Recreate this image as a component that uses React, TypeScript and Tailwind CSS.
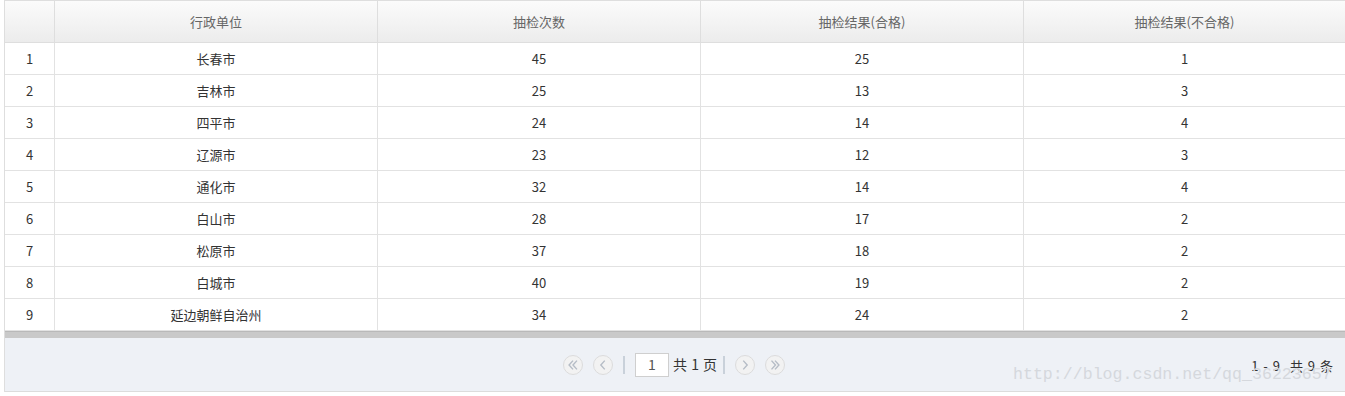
import React from "react";

const rows: [string, string, string, string][] = [
  ["长春市", "45", "25", "1"],
  ["吉林市", "25", "13", "3"],
  ["四平市", "24", "14", "4"],
  ["辽源市", "23", "12", "3"],
  ["通化市", "32", "14", "4"],
  ["白山市", "28", "17", "2"],
  ["松原市", "37", "18", "2"],
  ["白城市", "40", "19", "2"],
  ["延边朝鲜自治州", "34", "24", "2"],
];

const grid = "grid grid-cols-[50px_323px_323px_323px_1fr]";

function Circle({ children }: { children: React.ReactNode }) {
  return (
    <div className="w-[20px] h-[20px] rounded-full border border-[#dcdcdc] bg-[#f2f2f2] flex items-center justify-center">
      {children}
    </div>
  );
}

function Chev({ dir, double }: { dir: "l" | "r"; double?: boolean }) {
  return (
    <svg width="14" height="14" viewBox="0 0 16 16" fill="none" stroke="#b5bcc6" strokeWidth="1.6">
      {double ? (
        <>
          <path d={dir === "l" ? "M8 3 L3.5 8 L8 13" : "M4 3 L8.5 8 L4 13"} />
          <path d={dir === "l" ? "M12.5 3 L8 8 L12.5 13" : "M8 3 L12.5 8 L8 13"} />
        </>
      ) : (
        <path d={dir === "l" ? "M10 3 L5.5 8 L10 13" : "M6 3 L10.5 8 L6 13"} />
      )}
    </svg>
  );
}

export default function App() {
  return (
    <div
      className="w-[1345px] h-[396px] bg-white relative overflow-hidden"
      style={{ fontFamily: '"Noto Sans CJK SC", "Noto Sans", sans-serif' }}
    >
      <div className="ml-[4px] border-l border-[#dedede]">
        {/* header */}
        <div
          className={`${grid} h-[43px] border-t border-b border-[#dedede] bg-gradient-to-b from-[#fbfbfb] to-[#ececec] text-[13px] text-[#666]`}
        >
          <div className="border-r border-[#dedede]" />
          <div className="border-r border-[#dedede] flex items-center justify-center">行政单位</div>
          <div className="border-r border-[#dedede] flex items-center justify-center">抽检次数</div>
          <div className="border-r border-[#dedede] flex items-center justify-center">抽检结果(合格)</div>
          <div className="flex items-center justify-center">抽检结果(不合格)</div>
        </div>
        {rows.map((r, i) => (
          <div
            key={i}
            className={`${grid} h-[32px] border-b border-[#e2e2e2] text-[13px] text-[#333]`}
          >
            <div className="border-r border-[#e2e2e2] flex items-center justify-center">{i + 1}</div>
            <div className="border-r border-[#e2e2e2] flex items-center justify-center">{r[0]}</div>
            <div className="border-r border-[#e2e2e2] flex items-center justify-center">{r[1]}</div>
            <div className="border-r border-[#e2e2e2] flex items-center justify-center">{r[2]}</div>
            <div className="flex items-center justify-center">{r[3]}</div>
          </div>
        ))}
        {/* scroll band */}
        <div className="h-[7px] bg-[#c9c9c9] border-t border-[#b9b9b9]" />
        {/* pager */}
        <div className="h-[54px] bg-[#eef1f6] border-b border-[#dcdcdc] flex items-center relative">
          <div className="flex items-center ml-[558px] text-[13px] text-[#333]">
            <Circle>
              <Chev dir="l" double />
            </Circle>
            <div className="ml-[10px]">
              <Circle>
                <Chev dir="l" />
              </Circle>
            </div>
            <div className="w-[2px] h-[18px] bg-[#c9d1da] ml-[10px]" />
            <div className="ml-[10px] w-[34px] h-[24px] border border-[#cfcfcf] bg-white flex items-center justify-center text-[14px] text-[#555]">
              1
            </div>
            <div className="ml-[4px] text-[14px] text-[#333] tracking-[0.5px]">共 1 页</div>
            <div className="w-[2px] h-[18px] bg-[#c9d1da] ml-[5px]" />
            <div className="ml-[10px]">
              <Circle>
                <Chev dir="r" />
              </Circle>
            </div>
            <div className="ml-[10px]">
              <Circle>
                <Chev dir="r" double />
              </Circle>
            </div>
          </div>
          <div className="absolute right-[11px] top-[18px] text-[13px] text-[#333] flex items-center gap-[9px]">
            <span className="tracking-[1px]">1 - 9</span>
            <span className="tracking-[1px]">共 9 条</span>
          </div>
        </div>
      </div>
      <div
        className="absolute left-[1013px] top-[367px] text-[16.6px] text-[#d5d8dd] leading-none pointer-events-none whitespace-nowrap"
        style={{ fontFamily: '"Liberation Mono", monospace' }}
      >
        http://blog.csdn.net/qq_36223657
      </div>
    </div>
  );
}
